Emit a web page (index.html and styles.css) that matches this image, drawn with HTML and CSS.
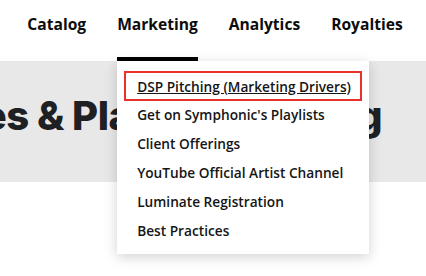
FILE: index.html
```html
<!DOCTYPE html>
<html lang="en">
<head>
    <meta charset="UTF-8">
    <meta name="viewport" content="width=device-width, initial-scale=1.0">
    <title>Marketing</title>
    <link rel="stylesheet" href="styles.css">
</head>
<body>
    <header class="top-bar">
        <nav class="main-nav">
            <div class="nav-item"><a href="#">Catalog</a></div>
            <div class="nav-item active">
                <a href="#">Marketing</a>
                <!-- Open dropdown for the active tab -->
                <ul class="dropdown">
                    <li class="focused"><a href="#">DSP Pitching (Marketing Drivers)</a></li>
                    <li><a href="#">Get on Symphonic's Playlists</a></li>
                    <li><a href="#">Client Offerings</a></li>
                    <li><a href="#">YouTube Official Artist Channel</a></li>
                    <li><a href="#">Luminate Registration</a></li>
                    <li><a href="#">Best Practices</a></li>
                </ul>
            </div>
            <div class="nav-item"><a href="#">Analytics</a></div>
            <div class="nav-item"><a href="#">Royalties</a></div>
        </nav>
    </header>

    <section class="hero">
        <h1 class="hero-title">Guides &amp; Playlist Pitching</h1>
    </section>
</body>
</html>
```

FILE: styles.css
```css
html {
    overflow: hidden;
}

body {
    font-family: 'Open Sans', 'Liberation Sans', sans-serif;
    margin: 0;
    padding: 0;
    min-height: 276px;
    background-color: #fff;
    color: #111;
}

a {
    color: inherit;
    text-decoration: none;
}

.top-bar {
    height: 61px;
    position: relative;
    z-index: 2;
}

.main-nav {
    display: flex;
    justify-content: center;
    gap: 31px;
    height: 100%;
    padding-left: 4px;
}

.nav-item {
    position: relative;
    display: flex;
    align-items: flex-start;
    padding-top: 13px;
    box-sizing: border-box;
    height: 100%;
    font-size: 15.6px;
    font-weight: 700;
    color: #0c0c0c;
}

.nav-item.active {
    border-bottom: 4px solid #000;
}

.dropdown {
    position: absolute;
    top: 61px;
    left: 0;
    width: 252px;
    margin: 0;
    padding: 10px 7px 9px;
    box-sizing: border-box;
    list-style: none;
    background-color: #fff;
    box-shadow: 0 3px 12px rgba(0, 0, 0, 0.18);
}

.dropdown li {
    height: 29px;
    display: flex;
    align-items: center;
    padding-left: 13px;
    font-size: 13.7px;
    font-weight: 600;
    color: #151515;
}

.dropdown li.focused {
    height: 30px;
    margin-bottom: -1px;
    outline: 2px solid #e8322a;
    outline-offset: -2px;
}

.dropdown li.focused a {
    text-decoration: underline;
}

.hero {
    height: 121px;
    background-color: #e8e8e8;
    overflow: hidden;
    display: flex;
    justify-content: flex-end;
    padding-right: 44px;
}

.hero-title {
    margin: 0;
    padding-top: 30px;
    white-space: nowrap;
    font-family: 'Inter', 'DejaVu Sans', sans-serif;
    font-size: 40px;
    font-weight: 800;
    letter-spacing: -0.5px;
    color: #1e2023;
}
```
